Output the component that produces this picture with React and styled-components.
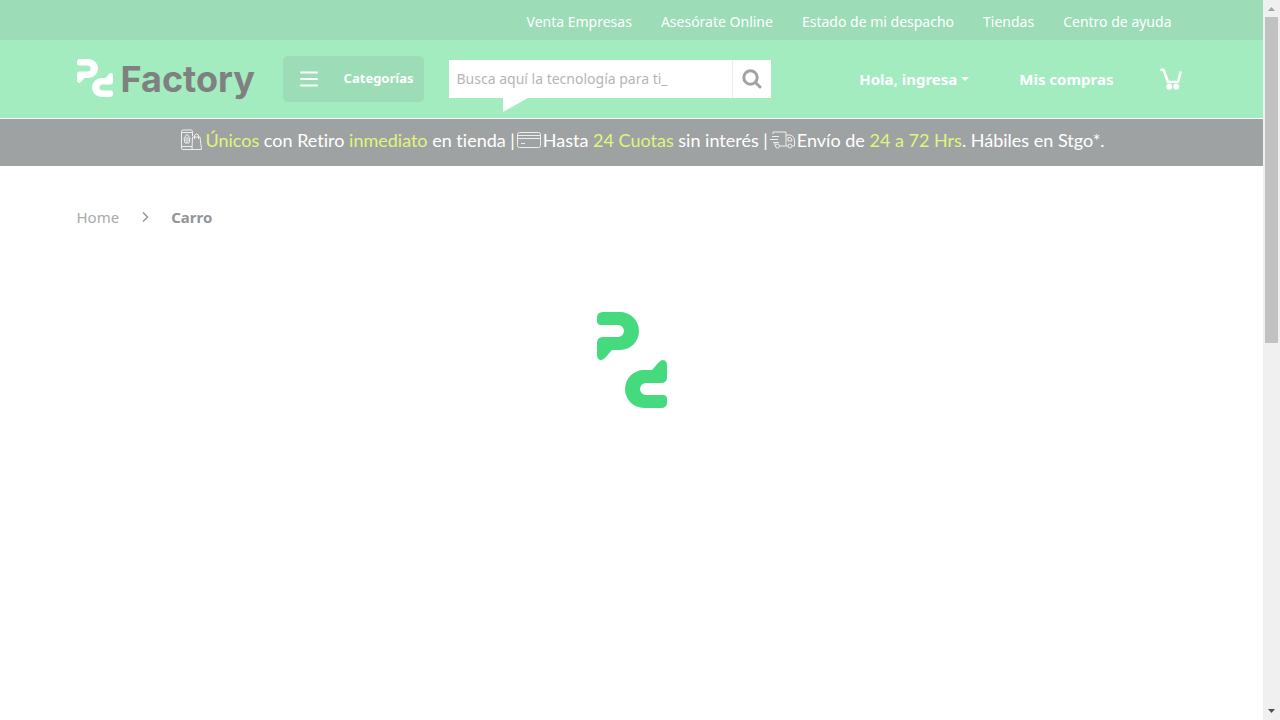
import React from "react";
import styled, { createGlobalStyle } from "styled-components";

const GlobalStyle = createGlobalStyle`
  * { box-sizing: border-box; }
  body {
    margin: 0;
    background: #fff;
    font-family: "Noto Sans", "Open Sans", sans-serif;
    font-size: 14px;
  }
  a { color: inherit; text-decoration: none; }
`;

const Shell = styled.div`
  display: grid;
  grid-template-columns: minmax(0, 1fr) 17px;
  min-height: 100vh;
`;

const Page = styled.div`
  position: relative;
`;

const Container = styled.div`
  display: flex;
  align-items: center;
  width: 100%;
  max-width: 1140px;
  margin: 0 auto;
  padding: 0 15px;
`;

const TopBar = styled.div`
  background: #9cdcb7;
  color: #fff;
`;

const TopNav = styled.nav`
  display: flex;
  gap: 29px;
  height: 40px;
  align-items: center;
  margin-left: auto;
  padding: 2px 15px 0 0;
  white-space: nowrap;
`;

const Header = styled.header`
  background: #a2ecbf;
  border-bottom: 1px solid #fff;
`;

const HeaderRow = styled(Container)`
  height: 78px;
`;

const Logo = styled.a`
  display: flex;
  width: 206px;
  gap: 8px;
  color: #808080;
  font: 700 36px/40px Inter, sans-serif;

  svg { flex: none; }
`;

const MenuButton = styled.button`
  display: flex;
  align-items: center;
  justify-content: space-between;
  width: 141px;
  height: 46px;
  padding: 0 10px 2px 17px;
  border: 0;
  border-radius: 5px;
  background: #9cdcb7;
  color: #fff;
  font: 700 13px/20px "Noto Sans", sans-serif;

  svg { margin-top: 2px; }
`;

const SearchForm = styled.form`
  position: relative;
  display: flex;
  width: 322px;
  height: 38px;
  margin-left: 25px;
  background: #fff;

  &::after {
    content: "";
    position: absolute;
    top: 100%;
    left: 54px;
    border-top: 14px solid #fff;
    border-right: 25px solid transparent;
  }
`;

const SearchInput = styled.input`
  flex: 1;
  min-width: 0;
  padding: 0 8px;
  border: 0;
  background: transparent;
  font: 14px/20px "Noto Sans", sans-serif;

  &::placeholder { color: #b3b6b9; opacity: 1; }
`;

const SearchButton = styled.button`
  display: grid;
  place-items: center;
  width: 39px;
  padding: 0;
  border: 0;
  border-left: 1px solid #ececec;
  background: transparent;
`;

const Account = styled.div`
  display: flex;
  align-items: center;
  gap: 46px;
  margin-left: auto;
  padding-right: 5px;
  color: #fff;
  font: 700 15px/20px "Noto Sans", sans-serif;
  white-space: nowrap;

  svg { display: block; }
`;

const AccountButton = styled.button`
  display: flex;
  align-items: center;
  gap: 4px;
  margin-right: 4px;
  padding: 0;
  border: 0;
  background: transparent;
  color: inherit;
  font: inherit;
`;

const Promo = styled.div`
  display: flex;
  align-items: center;
  justify-content: center;
  gap: 2px;
  height: 47px;
  padding: 0 0 5px 23px;
  background: #9fa2a3;
  color: #fff;
  font: 18px/24px Lato, sans-serif;
  font-variant-ligatures: none;
  white-space: nowrap;
`;

const Mark = styled.span`
  color: #e0f57d;
`;

const Breadcrumb = styled.nav`
  padding-top: 39px;
  color: #a6aaac;
  font-size: 15px;
  line-height: 24px;
`;

const Crumbs = styled(Container)`
  gap: 22px;

  strong { color: #929698; }
`;

const LoaderOverlay = styled.div`
  position: absolute;
  inset: 0;
  display: grid;
  place-items: center;
  pointer-events: none;
`;

const Scrollbar = styled.div`
  display: flex;
  flex-direction: column;
  align-items: center;
  background: #f0f0f0;
`;

const ScrollTrack = styled.div`
  display: grid;
  grid-template-rows: 19fr 21fr;
  flex: 1;
  width: 13px;
`;

const ScrollThumb = styled.div`
  background: #c1c1c1;
`;

const ScrollArrow = styled.svg`
  display: block;
  width: 17px;
  height: 17px;
`;

const HALF =
  "M6 0H23A19 19 0 0 1 23 38H15L8 46Q5 49 2 47.500Q0 46 0 43V31Q0 25 6 25H21A6 6 0 0 0 21 13H4Q0 13 0 9V6Q0 0 6 0Z";

const LogoMark = () => (
  <svg width="36" height="38" viewBox="0 0 72 76" fill="#fff" aria-hidden="true">
    <path d={HALF} />
    <path d={HALF} transform="rotate(180 36 38)" />
  </svg>
);

const Loader = () => (
  <svg width="70" height="96" viewBox="0 0 70 96" fill="#45da7e" role="img" aria-label="Cargando">
    <path d={HALF} />
    <path d={HALF} transform="rotate(180 35 48)" />
  </svg>
);

const BagIcon = () => (
  <svg width="22" height="22" viewBox="0 0 22 22" fill="none" stroke="#eee" aria-hidden="true">
    <path d="M12 20.500H2Q.5 20.500.5 19V2.500Q.5 1 2 1H10Q11.500 1 11.500 2.500V7M.5 3.500H11.500M.5 17.500H11" />
    <path d="M11.500 8H19L20.500 20.500H11Z M13.500 10V7Q13.500 5 15.500 5T17.500 7V10" />
    <path d="M3 9H9L8 14H4Z M4 8Q6 3 8 8M4 11H8M5 13H7" />
  </svg>
);

const CardIcon = () => (
  <svg width="24" height="16" viewBox="0 0 24 16" fill="none" stroke="#eee" aria-hidden="true">
    <rect x=".5" y=".5" width="23" height="15" rx="2" />
    <path d="M1 3.500H23M1 6.500H23M4 11.500H8" />
  </svg>
);

const TruckIcon = () => (
  <svg width="25" height="18" viewBox="0 0 25 18" fill="none" stroke="#eee" aria-hidden="true">
    <path d="M3 3V1H16V15H10M16 4H20Q24.500 5 24.500 10V15H22M18 15H16M18 6.500H20Q22 7 22 10H18ZM2 5.500H9M0 8.500H8M3 11.500H9M5 14.500V12" />
    <circle cx="7.500" cy="15" r="2" />
    <circle cx="20" cy="15" r="2" />
  </svg>
);

const links = [
  "Venta Empresas",
  "Asesórate Online",
  "Estado de mi despacho",
  "Tiendas",
  "Centro de ayuda",
];

export default function App() {
  return (
    <>
      <GlobalStyle />
      <Shell>
        <Page>
          <TopBar>
            <Container>
              <TopNav>
                {links.map((label) => (
                  <a href="#" key={label}>{label}</a>
                ))}
              </TopNav>
            </Container>
          </TopBar>

          <Header>
            <HeaderRow>
              <Logo href="#">
                <LogoMark />
                <span>Factory</span>
              </Logo>
              <MenuButton type="button">
                <svg width="18" height="16" viewBox="0 0 18 16" stroke="#fff" strokeWidth="2" strokeLinecap="round" aria-hidden="true">
                  <path d="M1 1.500H17M1 8H17M1 14.500H17" />
                </svg>
                Categorías
              </MenuButton>
              <SearchForm onSubmit={(e) => e.preventDefault()}>
                <SearchInput aria-label="Buscar" placeholder="Busca aquí la tecnología para ti_" />
                <SearchButton aria-label="Buscar">
                  <svg width="20" height="20" viewBox="0 0 20 20" fill="none" stroke="#a0a3a5" strokeWidth="3" strokeLinecap="round" aria-hidden="true">
                    <circle cx="8.500" cy="8.500" r="6.700" />
                    <path d="M13.500 13.500L18 18" />
                  </svg>
                </SearchButton>
              </SearchForm>
              <Account>
                <AccountButton type="button">
                  Hola, ingresa
                  <svg width="8" height="4" viewBox="0 0 8 4" fill="#fff" aria-hidden="true">
                    <path d="M0 0H8L4 4Z" />
                  </svg>
                </AccountButton>
                <a href="#">Mis compras</a>
                <a href="#" aria-label="Carro">
                  <svg width="22" height="22" viewBox="0 0 22 22" fill="none" stroke="#fff" strokeLinecap="round" strokeLinejoin="round" aria-hidden="true">
                    <path d="M1.500 1.800H3.500L8 14H18L20.500 4.500" strokeWidth="2.600" />
                    <circle cx="9.200" cy="18.800" r="3" fill="#fff" stroke="none" />
                    <circle cx="16.200" cy="18.800" r="3" fill="#fff" stroke="none" />
                  </svg>
                </a>
              </Account>
            </HeaderRow>
          </Header>

          <Promo>
            <BagIcon />
            <span><Mark>Únicos</Mark> con Retiro <Mark>inmediato</Mark> en tienda |</span>
            <CardIcon />
            <span>Hasta <Mark>24 Cuotas</Mark> sin interés |</span>
            <TruckIcon />
            <span>Envío de <Mark>24 a 72 Hrs</Mark>. Hábiles en Stgo*.</span>
          </Promo>

          <Breadcrumb aria-label="Ruta">
            <Crumbs>
              <a href="#">Home</a>
              <svg width="8" height="10" viewBox="0 0 8 10" fill="none" stroke="#94989a" strokeWidth="1.500" aria-hidden="true">
                <path d="M2 .5L6.500 5L2 9.500" />
              </svg>
              <strong>Carro</strong>
            </Crumbs>
          </Breadcrumb>

          <LoaderOverlay>
            <Loader />
          </LoaderOverlay>
        </Page>

        <Scrollbar aria-hidden="true">
          <ScrollArrow viewBox="0 0 17 17" fill="#a3a3a3">
            <path d="M5 11H12L8.500 7Z" />
          </ScrollArrow>
          <ScrollTrack>
            <ScrollThumb />
          </ScrollTrack>
          <ScrollArrow viewBox="0 0 17 17" fill="#505050">
            <path d="M5 6H12L8.500 10Z" />
          </ScrollArrow>
        </Scrollbar>
      </Shell>
    </>
  );
}
